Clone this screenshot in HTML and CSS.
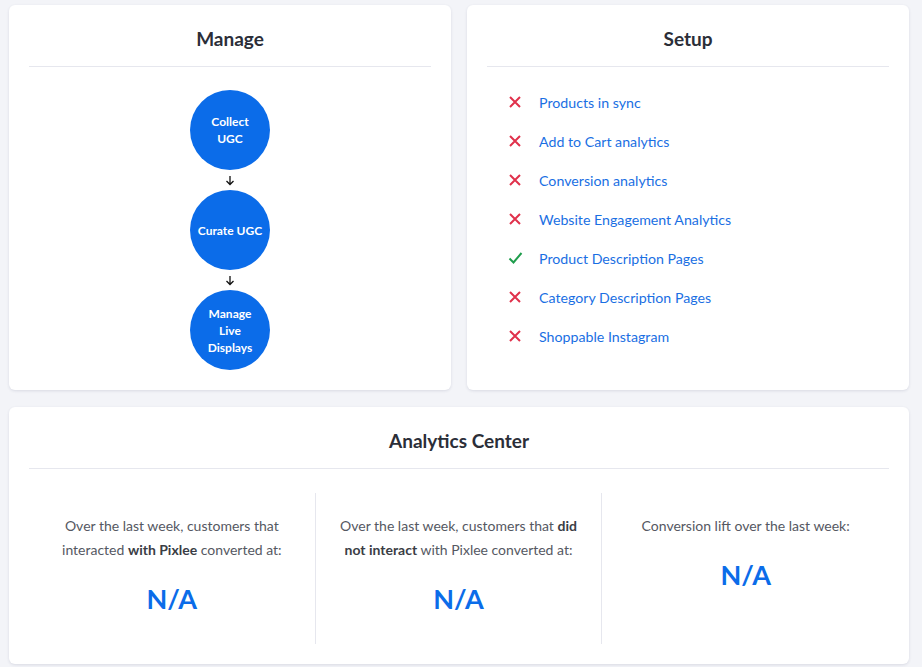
FILE: index.html
```html
<!DOCTYPE html>
<html>
<head>
<meta charset="utf-8">
<link rel="stylesheet" href="styles.css">
</head>
<body>
<div class="page">
  <div class="top-row">
    <section class="card">
      <h2 class="card-title">Manage</h2>
      <div class="flow">
        <div class="step">Collect<br>UGC</div>
        <div class="arrow"><svg width="10" height="11" viewBox="0 0 10 11"><path d="M5 1v8.5M1.5 6l3.5 3.5L8.5 6" fill="none" stroke="#111" stroke-width="1.3"/></svg></div>
        <div class="step">Curate UGC</div>
        <div class="arrow"><svg width="10" height="11" viewBox="0 0 10 11"><path d="M5 1v8.5M1.5 6l3.5 3.5L8.5 6" fill="none" stroke="#111" stroke-width="1.3"/></svg></div>
        <div class="step">Manage<br>Live<br>Displays</div>
      </div>
    </section>
    <section class="card">
      <h2 class="card-title">Setup</h2>
      <ul class="checklist">
        <li><span class="icon x"><svg width="14" height="14" viewBox="0 0 14 14"><path d="M2 2l10 10M12 2L2 12" stroke="#e0314b" stroke-width="2"/></svg></span><a>Products in sync</a></li>
        <li><span class="icon x"><svg width="14" height="14" viewBox="0 0 14 14"><path d="M2 2l10 10M12 2L2 12" stroke="#e0314b" stroke-width="2"/></svg></span><a>Add to Cart analytics</a></li>
        <li><span class="icon x"><svg width="14" height="14" viewBox="0 0 14 14"><path d="M2 2l10 10M12 2L2 12" stroke="#e0314b" stroke-width="2"/></svg></span><a>Conversion analytics</a></li>
        <li><span class="icon x"><svg width="14" height="14" viewBox="0 0 14 14"><path d="M2 2l10 10M12 2L2 12" stroke="#e0314b" stroke-width="2"/></svg></span><a>Website Engagement Analytics</a></li>
        <li><span class="icon ok"><svg width="15" height="14" viewBox="0 0 15 14"><path d="M1.5 7.5l4 4L13.5 2" fill="none" stroke="#1f9d4c" stroke-width="2"/></svg></span><a>Product Description Pages</a></li>
        <li><span class="icon x"><svg width="14" height="14" viewBox="0 0 14 14"><path d="M2 2l10 10M12 2L2 12" stroke="#e0314b" stroke-width="2"/></svg></span><a>Category Description Pages</a></li>
        <li><span class="icon x"><svg width="14" height="14" viewBox="0 0 14 14"><path d="M2 2l10 10M12 2L2 12" stroke="#e0314b" stroke-width="2"/></svg></span><a>Shoppable Instagram</a></li>
      </ul>
    </section>
  </div>
  <section class="card analytics">
    <h2 class="card-title">Analytics Center</h2>
    <div class="stats">
      <div class="stat">
        <p>Over the last week, customers that interacted <b>with Pixlee</b> converted at:</p>
        <div class="value">N/A</div>
      </div>
      <div class="stat">
        <p>Over the last week, customers that <b>did not interact</b> with Pixlee converted at:</p>
        <div class="value">N/A</div>
      </div>
      <div class="stat">
        <p>Conversion lift over the last week:</p>
        <div class="value">N/A</div>
      </div>
    </div>
  </section>
</div>
</body>
</html>
```
FILE: styles.css
```css
* { box-sizing: border-box; }
html, body { margin: 0; padding: 0; }
body {
  background: #f3f4f8;
  font-family: "Lato", "Noto Sans", sans-serif;
  color: #2b2e38;
  width: 922px;
  height: 667px;
  overflow: hidden;
}
.page {
  padding: 5px 13px 0 9px;
  display: flex;
  flex-direction: column;
  gap: 17px;
}
.top-row {
  display: grid;
  grid-template-columns: 442px 442px;
  gap: 16px;
}
.card {
  background: #fff;
  border-radius: 6px;
  box-shadow: 0 1px 3px rgba(30, 40, 80, 0.12);
  padding: 0 20px;
}
.top-row .card { height: 385px; }
.card-title {
  margin: 0;
  height: 62px;
  border-bottom: 1px solid #e6e7ee;
  display: flex;
  align-items: center;
  justify-content: center;
  padding-top: 6px;
  font-size: 19px;
  font-weight: 700;
  color: #2b2e38;
}
.flow {
  display: flex;
  flex-direction: column;
  align-items: center;
  padding-top: 23px;
}
.step {
  width: 80px;
  height: 80px;
  border-radius: 50%;
  background: #0b6ce9;
  color: #fff;
  font-weight: 700;
  font-size: 12px;
  line-height: 17px;
  display: flex;
  align-items: center;
  justify-content: center;
  text-align: center;
}
.arrow {
  height: 20px;
  display: flex;
  align-items: center;
  justify-content: center;
}
.arrow svg { display: block; }
.checklist {
  list-style: none;
  margin: 0;
  padding: 25px 0 0 21px;
  display: flex;
  flex-direction: column;
  gap: 19px;
}
.checklist li {
  display: flex;
  align-items: center;
  height: 20px;
}
.icon {
  width: 31px;
  display: flex;
  align-items: center;
}
.icon svg { display: block; }
.checklist a {
  color: #1a6fe3;
  font-size: 14.2px;
}
.analytics { height: 257px; }
.stats {
  display: grid;
  grid-template-columns: 1fr 1fr 1fr;
  padding-top: 24px;
}
.stat {
  height: 151px;
  border-right: 1px solid #e6e7ee;
  padding: 21px 18px 0;
  text-align: center;
}
.stat:last-child { border-right: none; }
.stat p {
  margin: 0;
  font-size: 14px;
  line-height: 24px;
  color: #555862;
}
.stat b { color: #3a3d45; }
.value {
  margin-top: 19px;
  font-size: 27px;
  font-weight: 700;
  color: #0b6ce9;
  line-height: 36px;
}
```
